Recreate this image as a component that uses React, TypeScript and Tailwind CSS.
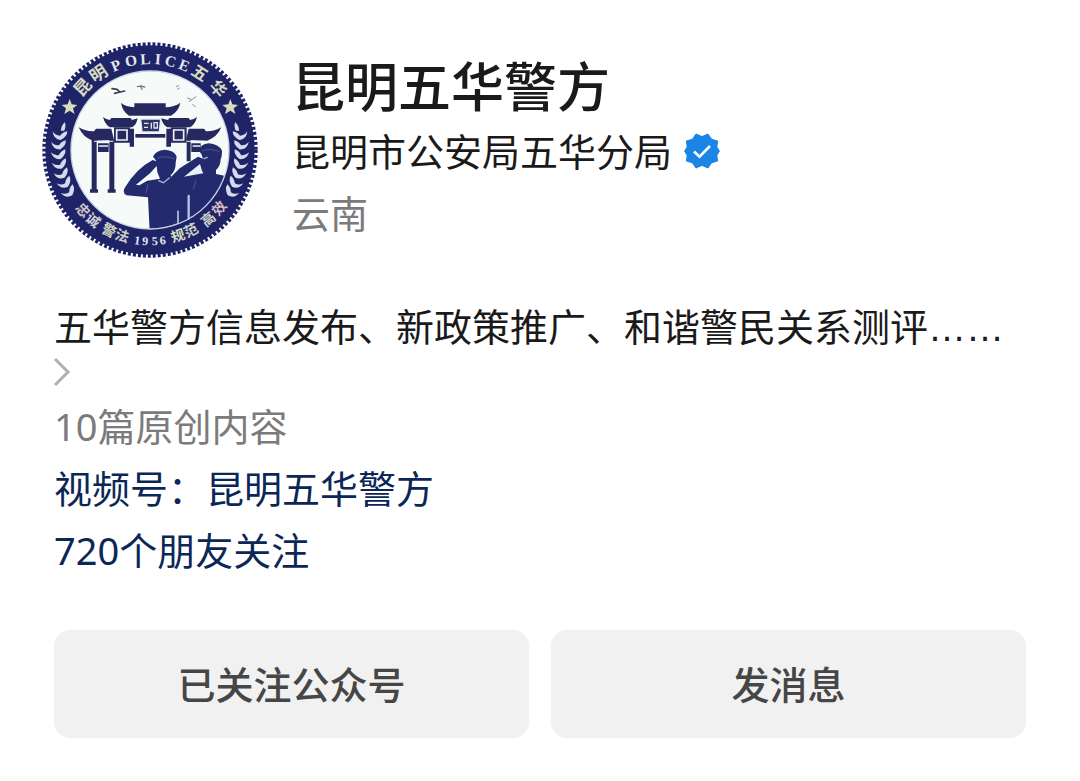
const NAVY = '#1f2468';
const PALE = '#e4e9ee';
const GOLD = '#d9dcc0';

const CENTER = 346;

type RingGlyph = { char: string; angle: number; size: number; fill: string };

const topGlyphs: RingGlyph[] = [
  { char: '昆', angle: -47, size: 52, fill: GOLD },
  { char: '明', angle: -34, size: 52, fill: GOLD },
  { char: 'P', angle: -22, size: 46, fill: PALE },
  { char: 'O', angle: -12, size: 46, fill: PALE },
  { char: 'L', angle: -3, size: 46, fill: PALE },
  { char: 'I', angle: 5, size: 46, fill: PALE },
  { char: 'C', angle: 13, size: 46, fill: PALE },
  { char: 'E', angle: 22, size: 46, fill: PALE },
  { char: '五', angle: 33, size: 48, fill: GOLD },
  { char: '华', angle: 48, size: 48, fill: GOLD },
];

const bottomGlyphs: RingGlyph[] = [
  { char: '忠', angle: 48, size: 42, fill: '#cfc3c6' },
  { char: '诚', angle: 39, size: 42, fill: '#cdd0d6' },
  { char: '警', angle: 27, size: 42, fill: GOLD },
  { char: '法', angle: 18, size: 42, fill: '#cdd0c8' },
  { char: '1', angle: 8, size: 36, fill: PALE },
  { char: '9', angle: 3, size: 36, fill: PALE },
  { char: '5', angle: -3, size: 36, fill: PALE },
  { char: '6', angle: -8, size: 36, fill: PALE },
  { char: '规', angle: -18, size: 42, fill: GOLD },
  { char: '范', angle: -27, size: 42, fill: '#cdd0c8' },
  { char: '高', angle: -40, size: 42, fill: '#cdd0c8' },
  { char: '效', angle: -50, size: 42, fill: '#dcbcc4' },
];

const leafAngles = [0, 1, 2, 3, 4, 5, 6];

function Laurel() {
  return (
    <g fill="#d5dbea">
      <path d="M78 288Q80 272 90 262Q96 276 88 288Z" />
      {leafAngles.map((i) => (
        <path
          key={i}
          d="M54 290Q62 303 76 303Q84 292 98 290Q98 306 78 316Q56 314 54 290Z"
          transform={`rotate(${-i * 6.1} ${CENTER} ${CENTER})`}
        />
      ))}
    </g>
  );
}

function Emblem() {
  return (
    <svg viewBox="22 22 648 648" className="size-54 shrink-0" role="img" aria-label="昆明五华警方">
      <circle cx="346" cy="346" r="314" fill={NAVY} />
      <circle cx="346" cy="346" r="317" fill="none" stroke={NAVY} strokeWidth="12" strokeDasharray="9 6" />
      <circle cx="346" cy="346" r="237" fill="#f6fbfa" stroke="#c9d3e6" strokeWidth="4" />

      <g fontFamily="'Liberation Serif', 'Noto Sans CJK SC', serif" fontWeight="700" textAnchor="middle">
        {topGlyphs.map((g) => (
          <text
            key={g.angle}
            x={CENTER}
            y="88"
            fontSize={g.size}
            fill={g.fill}
            transform={`rotate(${g.angle} ${CENTER} ${CENTER})`}
          >
            {g.char}
          </text>
        ))}
        {bottomGlyphs.map((g) => (
          <text
            key={g.angle}
            x={CENTER}
            y="632"
            fontSize={g.size}
            fill={g.fill}
            transform={`rotate(${g.angle} ${CENTER} ${CENTER})`}
          >
            {g.char}
          </text>
        ))}
      </g>

      <g fill={GOLD}>
        <path d="M105 193L111 209L128 211L115 221L120 238L105 228L89 238L94 221L81 211L99 209Z" />
        <path d="M587 193L593 209L610 211L597 221L602 238L587 228L571 238L576 221L563 211L581 209Z" />
      </g>
      <Laurel />
      <g transform="translate(692 0) scale(-1 1)">
        <Laurel />
      </g>

      <g fill="none" stroke="#3b4056" strokeLinecap="round">
        <path d="M232 162L247 164L256 172L270 169M240 176L256 172" strokeWidth="5" />
        <path d="M308 156L319 154L330 157M318 155L322 164" strokeWidth="4" stroke="#777c86" />
        <path d="M425 156L432 153M428 164L434 160M464 200L484 186M458 190L470 194M474 210L482 216" strokeWidth="3" stroke="#8c9096" />
      </g>

      <g fill="#25295f">
        <path d="M259 205Q274 216 299 218L299 206L393 206L393 218Q419 217 437 204Q432 230 409 243L283 243Q263 230 259 205Z" />
        <path d="M205 247Q216 256 226 256L230 250L288 250L292 256L309 251Q306 270 292 278L226 278Q211 270 205 247Z" />
        <path d="M487 247Q476 256 466 256L462 250L404 250L400 256L379 251Q384 270 398 278L466 278Q481 270 487 247Z" />
        <path d="M132 278Q154 291 178 290L184 282L230 282L238 316L174 318Q145 308 132 278Z" />
        <path d="M560 278Q538 291 514 290L508 282L462 282L454 316L518 318Q547 308 560 278Z" />
        <path d="M171 316H186V464H190V474H166V464H171ZM224 316H239V464H243V474H219V464H224Z" />
        <path d="M285 282H298V336H285ZM395 282H409V336H395ZM456 316H468V380H456Z" />
        <path d="M302 298H392V309H302Z" />
        <path d="M190 326H222V352H190ZM470 326H498V352H470Z" />
        <path d="M238 278H286V324H238ZM408 278H456V324H408Z" />
      </g>
      <g fill="none" stroke="#eef3f6" strokeWidth="5">
        <path d="M246 286H277V316H246ZM417 286H447V316H417Z" />
        <path d="M192 334H220M474 334H496" strokeWidth="4" />
        <path d="M178 320H236M456 320H514" strokeWidth="3" />
      </g>
      <path d="M318 253H378L374 292H322Z" fill="#2d3268" stroke="#e6edf2" strokeWidth="4" />
      <path d="M328 266H342M328 278H340M350 264V282M358 264H368V280H358Z" stroke="#dfe7ee" strokeWidth="4" fill="none" />

      <clipPath id="emblem-disc">
        <circle cx="346" cy="346" r="235" />
      </clipPath>
      <g fill="#232a6e" clipPath="url(#emblem-disc)">
        <path d="M494 350Q496 328 522 326Q552 328 562 348Q562 366 558 374Q558 394 544 406L544 418Q562 420 582 428V590H430V450L408 428L436 400L490 366L505 372L500 358Z" />
        <path d="M355 366Q362 348 390 345Q420 347 426 366L423 384Q424 408 408 422L410 430Q446 432 456 450Q464 470 462 590H345L340 488L276 482Q262 474 270 460Q304 402 354 376L364 380L363 376Z" />
      </g>
      <path d="M304 450L346 416L366 394L368 412L376 432L338 438L314 452Z" fill="#f6fbfa" />
      <path d="M448 426L496 388L502 408L506 416L472 422Z" fill="#eaf1f4" />
      <g fill="none" stroke="#b9c5df" strokeLinecap="round">
        <path d="M462 484V552" strokeWidth="7" />
        <path d="M430 530V564" strokeWidth="5" />
        <path d="M372 438L386 444L404 430M508 372L518 368" strokeWidth="4" stroke="#a9b5d6" />
        <path d="M368 370Q390 362 418 372M504 348Q526 340 554 350" strokeWidth="3" stroke="#4c578f" />
        <path d="M340 450L334 474M484 438L476 462" strokeWidth="3" stroke="#4c578f" />
      </g>
    </svg>
  );
}

function VerifiedBadge() {
  return (
    <svg viewBox="0 0 36 36" className="size-9 shrink-0" role="img" aria-label="已认证">
      <path
        d="M12 1L18 3.6L24 1L27.6 6.2L33.6 8L32.8 14L35.4 18L32.8 22.4L33.6 28L27.6 29.8L24 35L18 32.4L12 35L8.4 29.8L2.4 28L3.2 22.4L0.6 18L3.2 14L2.4 8L8.4 6.2Z"
        fill="#1b84e7"
        stroke="#1b84e7"
        strokeLinejoin="round"
      />
      <path d="M10 18.5L15.5 23.6L26 13" fill="none" stroke="#fff" strokeWidth="2.6" />
    </svg>
  );
}

export default function App() {
  return (
    <main className="bg-white px-[54px] pt-[42px] pb-10 font-['Noto_Sans','Noto_Sans_CJK_SC',sans-serif] text-[38px] text-[#1a1a1a]">
      <header className="-ml-3 flex items-start gap-[34px]">
        <Emblem />
        <div className="pt-3">
          <h1 className="text-[53px] leading-[66px] font-medium">昆明五华警方</h1>
          <div className="flex items-center gap-3 leading-[62px]">
            <p>昆明市公安局五华分局</p>
            <VerifiedBadge />
          </div>
          <p className="leading-[62px] text-[#7b7b7b]">云南</p>
        </div>
      </header>

      <section className="mt-[37px] leading-[62px]">
        <a href="#about" className="block">
          <span className="block">
            五华警方信息发布、新政策推广、和谐警民关系测评
            <span className="font-['Liberation_Sans',sans-serif]">……</span>
          </span>
          <svg viewBox="0 0 18 30" className="-mt-0.5 h-[30px] w-[18px]" aria-hidden="true">
            <path d="M1 2L14 15L1 28" fill="none" stroke="#b0b0b0" strokeWidth="3" />
          </svg>
        </a>
        <p className="mt-2 text-[#7b7b7b]">10篇原创内容</p>
        <a href="#channel" className="block text-[#0b2757]">视频号：昆明五华警方</a>
        <a href="#friends" className="block text-[#0b2757]">720个朋友关注</a>
      </section>

      <div className="mt-[49px] grid grid-cols-2 gap-[22px] font-medium text-[#464646]">
        <button type="button" className="h-27 rounded-2xl bg-[#f1f1f1]">已关注公众号</button>
        <button type="button" className="h-27 rounded-2xl bg-[#f1f1f1]">发消息</button>
      </div>
    </main>
  );
}
